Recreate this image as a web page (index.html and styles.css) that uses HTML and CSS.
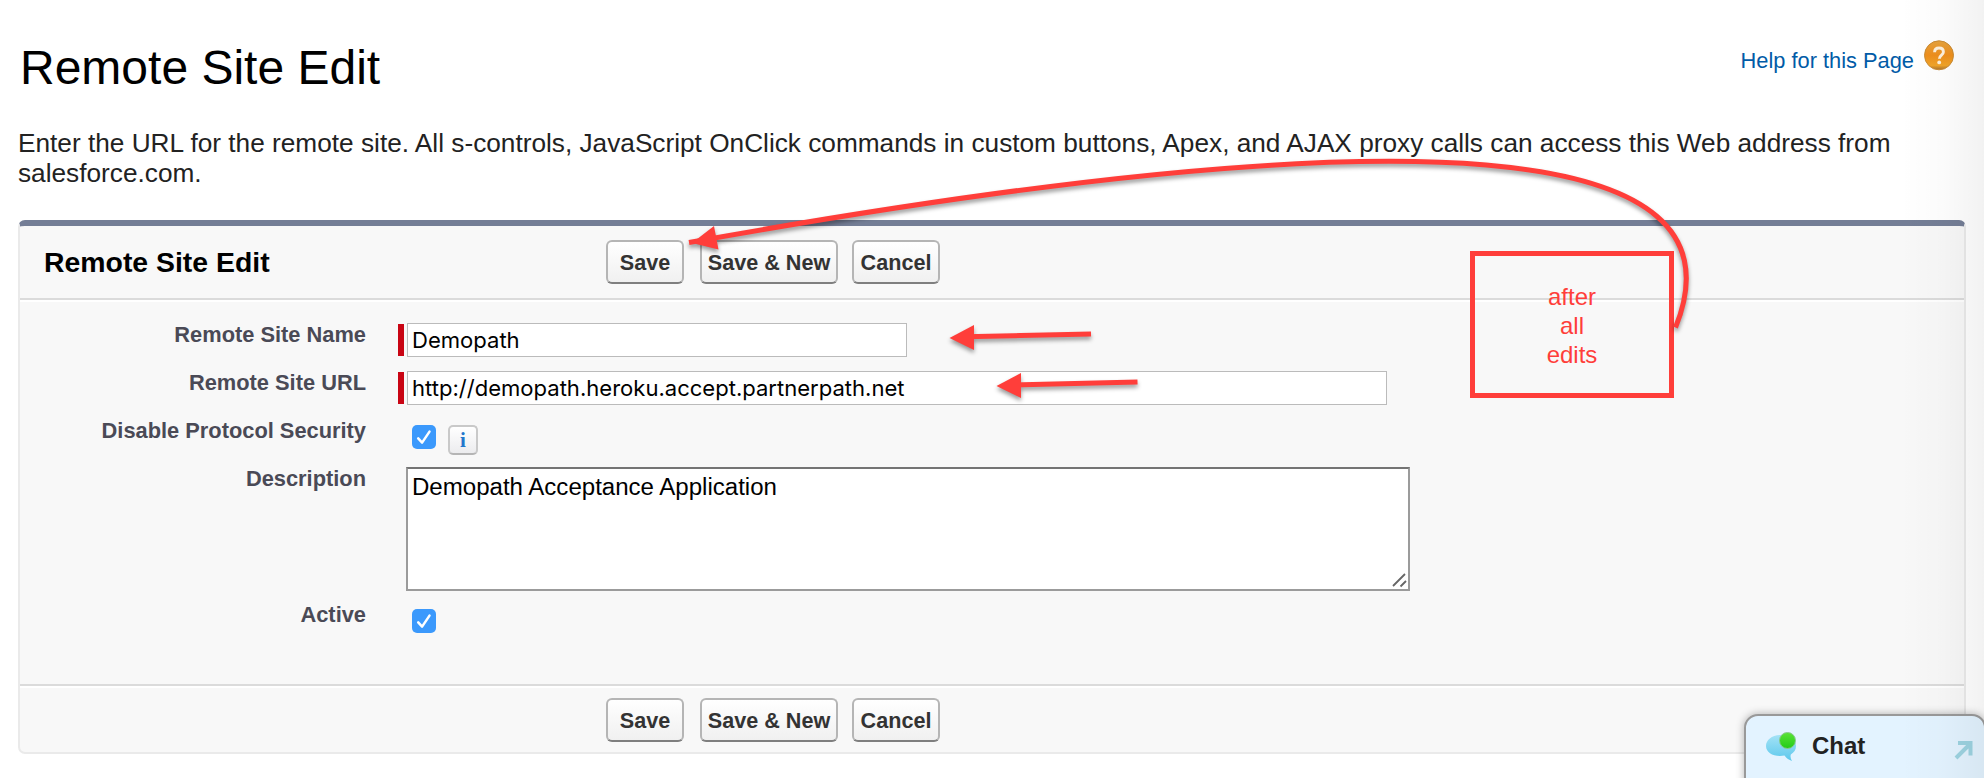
FILE: index.html
```html
<!DOCTYPE html>
<html lang="en">
<head>
<meta charset="utf-8">
<title>Remote Site Edit</title>
<link rel="stylesheet" href="styles.css">
</head>
<body>
<div class="page">
  <header class="page-header">
    <h1 class="page-title">Remote Site Edit</h1>
    <a class="help-link"><span class="help-text">Help for this Page</span>
      <svg class="help-icon" width="30" height="31" viewBox="0 0 30 31">
        <defs><linearGradient id="orange" x2="0" y2="1"><stop offset="0" stop-color="#e5a23c"/><stop offset=".5" stop-color="#ee8e1c"/><stop offset=".85" stop-color="#f0a428"/><stop offset="1" stop-color="#a8702c"/></linearGradient></defs>
        <circle cx="15" cy="15.300" r="14.500" fill="url(#orange)" stroke="#c98b35" stroke-width="1"/>
        <path d="M10.600 12.200c0-2.700 1.800-4.200 4.400-4.200s4.400 1.500 4.400 3.900c0 3.300-4 3.100-4 6.800" fill="none" stroke="#fdf0dc" stroke-width="2.900"/>
        <circle cx="15.200" cy="22.400" r="1.900" fill="#fdf0dc"/>
      </svg>
    </a>
  </header>
  <p class="intro">Enter the URL for the remote site. All s-controls, JavaScript OnClick commands in custom buttons, Apex, and AJAX proxy calls can access this Web address from salesforce.com.</p>
  <form class="panel">
    <div class="panel-head">
      <h2 class="panel-title">Remote Site Edit</h2>
      <div class="buttons">
        <button type="button" class="btn btn-save">Save</button>
        <button type="button" class="btn btn-new">Save &amp; New</button>
        <button type="button" class="btn btn-cancel">Cancel</button>
      </div>
    </div>
    <div class="panel-body">
      <div class="row"><span class="label">Remote Site Name</span>
        <div class="field"><span class="required"></span><div class="input input-name"><span class="name-value">Demopath</span></div></div></div>
      <div class="row"><span class="label">Remote Site URL</span>
        <div class="field"><span class="required"></span><div class="input input-url"><span class="url-value">http://demopath.heroku.accept.partnerpath.net</span></div></div></div>
      <div class="row"><span class="label">Disable Protocol Security</span>
        <div class="field checks">
          <svg class="check" width="24" height="24" viewBox="0 0 24 24"><rect width="24" height="24" rx="5" fill="#3b99fc"/><path d="M6.200 13.400l3.900 4.200L17.500 6.600" fill="none" stroke="#fff" stroke-width="2.500" stroke-linecap="round" stroke-linejoin="round"/></svg>
          <span class="info">i</span>
        </div></div>
      <div class="row row-description"><span class="label">Description</span>
        <div class="field"><div class="textarea">Demopath Acceptance Application
          <svg class="grip" width="16" height="16" viewBox="0 0 16 16"><path d="M2 14L14 2M9.500 14.500L15 9" stroke="#666" stroke-width="1.800" fill="none"/></svg>
        </div></div></div>
      <div class="row"><span class="label">Active</span>
        <div class="field checks">
          <svg class="check" width="24" height="24" viewBox="0 0 24 24"><rect width="24" height="24" rx="5" fill="#3b99fc"/><path d="M6.200 13.400l3.900 4.200L17.500 6.600" fill="none" stroke="#fff" stroke-width="2.500" stroke-linecap="round" stroke-linejoin="round"/></svg>
        </div></div>
    </div>
    <div class="panel-foot">
      <div class="buttons">
        <button type="button" class="btn btn-save">Save</button>
        <button type="button" class="btn btn-new">Save &amp; New</button>
        <button type="button" class="btn btn-cancel">Cancel</button>
      </div>
    </div>
  </form>
</div>
<div class="chat">
  <svg class="chat-icon" width="32" height="32" viewBox="0 0 32 32">
    <defs><linearGradient id="bubble" x2="0" y2="1"><stop offset="0" stop-color="#a3e2f6"/><stop offset="1" stop-color="#5cc8ec"/></linearGradient>
    <linearGradient id="green" x2="0" y2="1"><stop offset="0" stop-color="#5be236"/><stop offset="1" stop-color="#22cc18"/></linearGradient></defs>
    <path d="M15 4C6 4 0 9 0 15s6 10 14 10c1.500 0 3 0 4.500-.4 2 2.800 4.500 4.600 7.500 5.400-1.400-2-1.800-4.200-1.200-6.600C28 21.500 30 19 30 15c0-6-6-11-15-11z" fill="url(#bubble)"/>
    <circle cx="21.500" cy="9.500" r="8" fill="url(#green)" stroke="#8bc890" stroke-width="1"/>
  </svg>
  <span class="chat-label">Chat</span>
  <svg class="popout" width="20" height="20" viewBox="0 0 20 20"><path d="M2 18L15 5M4 3H16.500V15.500" fill="none" stroke="#9dd3e1" stroke-width="4"/></svg>
</div>
<div class="edge-shade"></div>
<div class="note">after<br>all<br>edits</div>
<svg class="arrows" width="1984" height="778" viewBox="0 0 1984 778">
  <g fill="none" stroke="#ff3e3a" stroke-width="5">
    <path d="M1675.500 327.500Q1790 45 689 242.500"/>
    <path d="M1091 334L965 336.800"/>
    <path d="M1137.500 382L1012 385"/>
  </g>
  <g fill="#ff3e3a">
    <path d="M692 243L714 226L718.500 249.500Z"/>
    <path d="M949.500 338L974 325V350Z"/>
    <path d="M996.500 386L1021 373V398Z"/>
  </g>
</svg>
</body>
</html>
```
FILE: styles.css
```css
* { box-sizing: border-box; }
body {
  margin: 0;
  width: 1984px;
  height: 778px;
  overflow: hidden;
  position: relative;
  background: #fff;
  font-family: "Liberation Sans", Arial, sans-serif;
  color: #222;
}
.page { padding: 40px 18px 0 18px; }
.page-header { display: flex; justify-content: space-between; height: 88px; }
.page-title { margin: 0; padding-left: 2px; font-size: 48px; font-weight: 400; line-height: 56px; color: #000; }
.help-link { display: flex; gap: 10px; margin-right: 12px; color: #015ba7; font-size: 21.84px; white-space: nowrap; }
.help-text { line-height: 24px; padding-top: 9px; }
.intro { margin: 0; height: 92px; font-size: 26.23px; line-height: 30px; }

.panel {
  height: 534px;
  border: 2px solid #eaeaea;
  border-top: 6px solid #747e96;
  border-radius: 7px;
  background: #f8f8f8;
}
.panel-head {
  display: flex;
  align-items: flex-start;
  height: 74px;
  padding: 14px 0 0 24px;
  border-bottom: 2px solid #dbdbdb;
}
.panel-title { margin: 0; width: 562px; font-size: 28.4px; line-height: 45px; color: #000; }
.buttons { display: flex; }
.btn {
  height: 44px;
  padding: 1px 0 0;
  border: 2px solid #b5b5b5;
  border-bottom-color: #7f7f7f;
  border-radius: 6px;
  background: linear-gradient(#fff, #f0f0f0);
  font: bold 21.6px "Liberation Sans", Arial, sans-serif;
  color: #333;
}
.btn-save { width: 78px; margin-right: 16px; }
.btn-new { width: 138px; margin-right: 14px; }
.btn-cancel { width: 88px; }

.panel-body {
  height: 386px;
  padding-top: 21px;
  border-top: 2px solid #fff;
  border-bottom: 2px solid #dbdbdb;
}
.row { display: flex; height: 48px; }
.row-description { height: 136px; }
.label {
  width: 346px;
  text-align: right;
  font-size: 21.84px;
  font-weight: bold;
  line-height: 24px;
  color: #4a4a56;
}
.field { display: flex; padding-left: 32px; }
.required { width: 6px; height: 32px; margin: 1px 3px 0 0; background: #c90514; }
.input {
  height: 34px;
  padding-left: 4px;
  border: 1px solid #bbb;
  background: #fff;
  font-family: Inter, sans-serif;
  font-size: 22.05px;
  line-height: 33px;
  color: #000;
}
.input-name { width: 500px; }
.input-url { width: 980px; }
.checks { padding: 6px 0 0 46px; gap: 12px; }
.info {
  width: 30px;
  height: 30px;
  border: 2px solid #c9c9c9;
  border-radius: 5px;
  border-bottom-color: #b5b5b5;
  background: linear-gradient(#fff, #ececee);
  text-align: center;
  font: bold 21px/27px "Liberation Serif", serif;
  color: #2277cc;
}
.textarea {
  position: relative;
  width: 1004px;
  height: 124px;
  margin-left: 8px;
  padding: 4px;
  border: 2px solid #9b9b9b;
  border-top-color: #747474;
  background: #fff;
  font-size: 24.05px;
  line-height: 28px;
  color: #000;
}
.grip { position: absolute; right: 1px; bottom: 1px; }
.panel-foot { height: 68px; padding: 10px 0 0 586px; border-top: 2px solid #fff; }

.chat {
  position: absolute;
  left: 1744px;
  top: 714px;
  width: 242px;
  height: 80px;
  display: flex;
  padding: 15px 10px 0 20px;
  border: 2px solid #999;
  border-radius: 14px;
  background: #e3f3ff;
  box-shadow: 0 0 8px rgba(0, 0, 0, .3);
}
.chat-label { margin-left: 14px; padding-top: 2px; font-size: 24px; font-weight: bold; line-height: 26px; }
.popout { margin: 9px 0 0 auto; }
.edge-shade {
  position: absolute;
  right: 0;
  top: 0;
  width: 84px;
  height: 778px;
  background: linear-gradient(to right, rgba(0, 0, 0, 0), rgba(0, 0, 0, .015) 50%, rgba(0, 0, 0, .05));
}
.note {
  position: absolute;
  left: 1470px;
  top: 251px;
  width: 204px;
  height: 147px;
  padding-top: 26px;
  border: 5px solid #ff3e3a;
  text-align: center;
  font-size: 24px;
  line-height: 29px;
  color: #ff3e3a;
}
.arrows { position: absolute; left: 0; top: 0; filter: drop-shadow(0 3px 2px rgba(0, 0, 0, .4)); }
```
